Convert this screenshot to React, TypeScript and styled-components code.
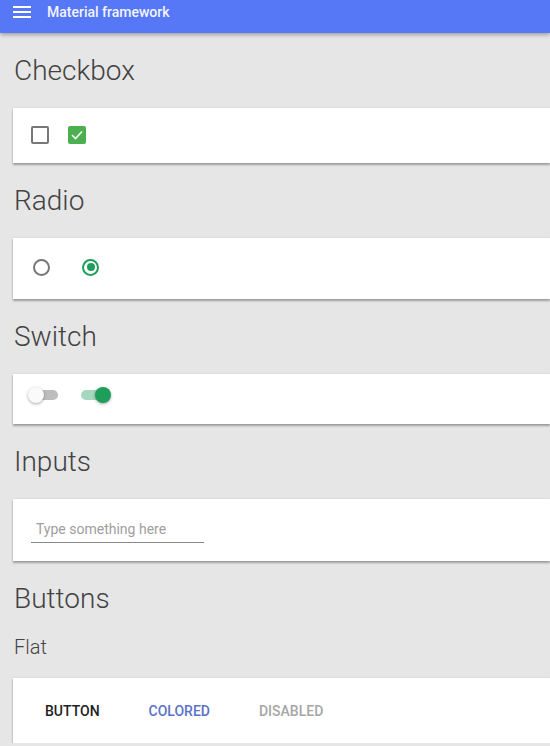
import styled, { createGlobalStyle } from "styled-components";

const GlobalStyle = createGlobalStyle`
  html, body {
    margin: 0;
    padding: 0;
    overflow-x: hidden;
  }
  body {
    background: #e6e6e6;
    font-family: Roboto, "Liberation Sans", sans-serif;
  }
`

const green = '#1e9e5b';

const AppBar = styled.header`
  height: 32px;
  background: #5677f6;
  box-shadow: 0 2px 4px rgba(0, 0, 0, 0.3);
  display: flex;
  align-items: flex-start;
  padding: 1px 13px 0;
  gap: 16px;
  position: relative;
  z-index: 1;
`

const MenuButton = styled.span`
  display: flex;
  height: 22px;
  align-items: center;
`

const Title = styled.span`
  color: #f2f4ff;
  font-size: 14px;
  font-weight: 500;
  line-height: 22px;
`

const Main = styled.main`
  padding-left: 13px;
`

const SectionTitle = styled.h2`
  margin: 0;
  padding-left: 1px;
  font-size: 28px;
  font-weight: 300;
  line-height: 75px;
  color: #424242;
`

const SubTitle = styled.h3`
  margin: 0 0 20px;
  padding-left: 1px;
  font-size: 20px;
  font-weight: 300;
  line-height: 22px;
  color: #444;
`

// cards run off the right edge of the window in the reference
const Card = styled.div<{ h: number; pad: number; gap?: number; lift?: number }>`
  height: ${p => p.h}px;
  padding-left: ${p => p.pad}px;
  padding-bottom: ${p => p.lift ?? 0}px;
  background: #fff;
  box-shadow: 0 2px 2px rgba(0, 0, 0, 0.3), 0 0 2px rgba(0, 0, 0, 0.12);
  display: flex;
  align-items: center;
  gap: ${p => p.gap ?? 0}px;
  box-sizing: border-box;
`

const InputCard = styled(Card)`
  align-items: flex-start;
  padding-top: 20px;
`

const Box = styled.span<{ checked?: boolean }>`
  width: 18px;
  height: 18px;
  box-sizing: border-box;
  border-radius: 2px;
  border: ${p => p.checked ? 'none' : '2px solid #777'};
  background: ${p => p.checked ? '#4caf50' : 'transparent'};
  display: flex;
  align-items: center;
  justify-content: center;
`

const RadioRing = styled.span<{ checked?: boolean }>`
  width: 17px;
  height: 17px;
  box-sizing: border-box;
  border-radius: 50%;
  border: 2px solid ${p => p.checked ? green : '#777'};
  display: flex;
  align-items: center;
  justify-content: center;
`

const RadioDot = styled.span`
  width: 8px;
  height: 8px;
  border-radius: 50%;
  background: ${green};
`

const SwitchWrap = styled.span`
  position: relative;
  width: 34px;
  height: 20px;
  display: block;
`

const Track = styled.span<{ on?: boolean }>`
  position: absolute;
  left: 2px;
  right: 4px;
  top: 5px;
  height: 10px;
  border-radius: 5px;
  background: ${p => p.on ? 'rgba(30, 158, 91, 0.4)' : '#bdbdbd'};
`

const Knob = styled.span<{ on?: boolean }>`
  position: absolute;
  top: 2px;
  left: ${p => p.on ? 16 : 0}px;
  width: 16px;
  height: 16px;
  border-radius: 50%;
  background: ${p => p.on ? green : '#fafafa'};
  box-shadow: 0 1px 3px rgba(0, 0, 0, 0.35);
`

const TextInput = styled.input`
  width: 168px;
  height: 20px;
  box-sizing: content-box;
  padding: 0 0 3px 5px;
  margin: 0;
  border: none;
  border-bottom: 1px solid #888;
  outline: none;
  font-family: Roboto, "Liberation Sans", sans-serif;
  font-size: 14px;
  color: #333;
  background: transparent;
  &::placeholder {
    color: #9e9e9e;
  }
`

const FlatButton = styled.button<{ tone?: 'plain' | 'colored' | 'disabled' }>`
  height: 36px;
  padding: 0 16px;
  border: none;
  background: transparent;
  font-family: Roboto, "Liberation Sans", sans-serif;
  font-size: 14px;
  font-weight: 500;
  color: ${p => p.tone === 'colored' ? '#5b72c6' : p.tone === 'disabled' ? '#a6a6a6' : '#222'};
`

function Switch({ on }: { on?: boolean }) {
  return (
    <SwitchWrap>
      <Track on={on} />
      <Knob on={on} />
    </SwitchWrap>
  )
}

export default function App() {
  return (
    <>
      <GlobalStyle />
      <AppBar>
        <MenuButton>
          <svg width="18" height="12" viewBox="0 0 18 12">
            <rect x="0" y="0" width="18" height="2" fill="#fff" />
            <rect x="0" y="5" width="18" height="2" fill="#fff" />
            <rect x="0" y="10" width="18" height="2" fill="#fff" />
          </svg>
        </MenuButton>
        <Title>Material framework</Title>
      </AppBar>
      <Main>
        <SectionTitle>Checkbox</SectionTitle>
        <Card h={55} pad={18} gap={19} lift={2}>
          <Box />
          <Box checked>
            <svg width="12" height="10" viewBox="0 0 12 10">
              <path d="M1 5 L4.5 8.5 L11 1.5" fill="none" stroke="#fff" strokeWidth="1.6" />
            </svg>
          </Box>
        </Card>

        <SectionTitle>Radio</SectionTitle>
        <Card h={61} pad={20} gap={32} lift={3}>
          <RadioRing />
          <RadioRing checked><RadioDot /></RadioRing>
        </Card>

        <SectionTitle>Switch</SectionTitle>
        <Card h={50} pad={15} gap={17} lift={8}>
          <Switch />
          <Switch on />
        </Card>

        <SectionTitle>Inputs</SectionTitle>
        <InputCard h={62} pad={18}>
          <TextInput placeholder="Type something here" />
        </InputCard>

        <SectionTitle>Buttons</SectionTitle>
        <SubTitle>Flat</SubTitle>
        <Card h={65} pad={16} gap={17}>
          <FlatButton>BUTTON</FlatButton>
          <FlatButton tone="colored">COLORED</FlatButton>
          <FlatButton tone="disabled" disabled>DISABLED</FlatButton>
        </Card>
      </Main>
    </>
  )
}
